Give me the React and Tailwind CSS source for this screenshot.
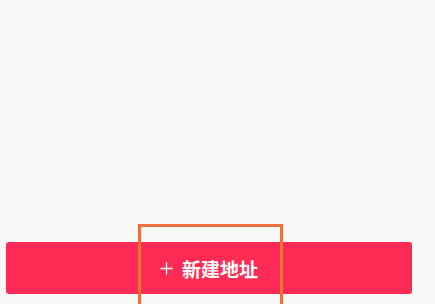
import React from 'react';

export default function App() {
  return (
    <div
      className="relative h-[304px] w-full bg-[#f8f8f8] flex flex-col justify-end pb-[10px] pl-[6px] overflow-hidden"
      style={{ fontFamily: '"Noto Sans CJK SC", "Noto Sans", sans-serif' }}
    >
      <button className="w-[406px] h-[52px] rounded-[3px] bg-[#ff2b54] text-white flex items-center justify-center gap-[9px]">
        <svg width="13" height="13" viewBox="0 0 13 13" className="shrink-0">
          <path d="M6.5 0.5 V12.5 M0.5 6.5 H12.5" stroke="white" strokeWidth="1.3" />
        </svg>
        <span className="text-[19px] font-bold leading-none">新建地址</span>
      </button>

      {/* highlight box */}
      <div className="absolute left-[138px] top-[224px] w-[145px] h-[100px] border-[3px] border-[#ee7040]" />
    </div>
  );
}
